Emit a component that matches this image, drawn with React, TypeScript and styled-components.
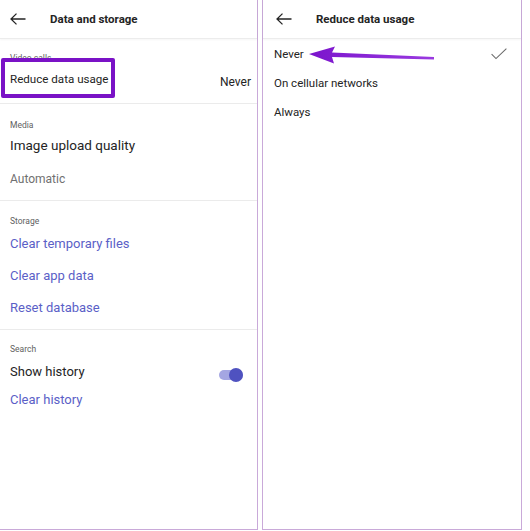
import React from "react";
import styled, { createGlobalStyle } from "styled-components";

const GlobalStyle = createGlobalStyle`
  html, body {
    margin: 0;
    padding: 0;
    background: #ffffff;
  }
  body {
    font-family: Roboto, "Noto Sans", "Liberation Sans", sans-serif;
    color: #242424;
  }
`;

const Page = styled.div`
  display: flex;
  width: 530px;
  height: 531px;
  background: #fff;
`;

const Panel = styled.div<{ $edge?: boolean }>`
  position: relative;
  box-sizing: border-box;
  width: ${(p) => (p.$edge ? "260px" : "258px")};
  height: 530px;
  margin-left: ${(p) => (p.$edge ? "4px" : "0")};
  border-right: 1px solid #c9a9d9;
  border-bottom: 1px solid #c9a9d9;
  border-left: ${(p) => (p.$edge ? "1px solid #c9a9d9" : "none")};
  display: flex;
  flex-direction: column;
`;

const Header = styled.div<{ $inset: number }>`
  height: 38px;
  display: flex;
  align-items: center;
  padding-left: ${(p) => p.$inset}px;
  border-bottom: 1px solid #ececec;
  box-shadow: 0 1px 2px rgba(0, 0, 0, 0.04);
`;

const Title = styled.div<{ $gap: number }>`
  margin-left: ${(p) => p.$gap}px;
  font-size: 11.5px;
  font-weight: 700;
  color: #242424;
`;

const Section = styled.div<{ $top: number; $bottom: number; $last?: boolean }>`
  padding: ${(p) => p.$top}px 6px ${(p) => p.$bottom}px 10px;
  border-bottom: ${(p) => (p.$last ? "none" : "1px solid #ebebeb")};
`;

const Label = styled.div`
  height: 12px;
  line-height: 12px;
  font-size: 8.5px;
  color: #616161;
`;

const Row = styled.div<{ $h: number; $mt?: number }>`
  display: flex;
  align-items: center;
  justify-content: space-between;
  height: ${(p) => p.$h}px;
  margin-top: ${(p) => p.$mt ?? 0}px;
`;

const Text = styled.span<{ $size?: number; $tone?: "main" | "muted" | "link" }>`
  font-size: ${(p) => p.$size ?? 13}px;
  color: ${(p) =>
    p.$tone === "link" ? "#5b5fc7" : p.$tone === "muted" ? "#707070" : "#242424"};
`;

const Value = styled.span`
  font-size: 12px;
  color: #242424;
  margin-top: 6px;
`;

const Toggle = styled.div`
  display: flex;
  align-items: center;
  justify-content: flex-end;
  width: 24px;
  height: 10px;
  margin: 8px 8px 0 0;
  border-radius: 5px;
  background: #a4a6e2;
`;

const Thumb = styled.div`
  width: 14px;
  height: 14px;
  flex: none;
  border-radius: 50%;
  background: #4f52c0;
`;

const Options = styled.div`
  display: flex;
  flex-direction: column;
  padding: 0 14px 0 11px;
`;

const Option = styled.div`
  display: flex;
  align-items: center;
  justify-content: space-between;
  height: 29px;
  font-size: 11.5px;
  color: #242424;
`;

/* highlight frame around the first setting */
const Frame = styled.div`
  position: absolute;
  left: 1px;
  top: 58px;
  width: 114px;
  height: 40px;
  box-sizing: border-box;
  border: 4px solid #7a12c6;
  border-radius: 2px;
`;

const Pointer = styled.svg`
  position: absolute;
  left: 44px;
  top: 44px;
`;

const BackArrow = () => (
  <svg width="16" height="12" viewBox="0 0 16 12" fill="none">
    <path d="M15.5 6H1M6.5 0.6 1 6l5.5 5.4" stroke="#242424" strokeWidth="1.3" />
  </svg>
);

const Check = () => (
  <svg width="16" height="12" viewBox="0 0 16 12" fill="none">
    <path d="M0.6 6.2 5 10.6 15.4 0.6" stroke="#6b6b6b" strokeWidth="1.1" />
  </svg>
);

const App = () => {
  return (
    <Page>
      <GlobalStyle />
      <Panel>
        <Header $inset={10}>
          <BackArrow />
          <Title $gap={24}>Data and storage</Title>
        </Header>

        <Section $top={13} $bottom={12}>
          <Label>Video calls</Label>
          <Row $h={24} $mt={3}>
            <Text $size={11.6}>Reduce data usage</Text>
            <Value>Never</Value>
          </Row>
        </Section>

        <Section $top={15} $bottom={11}>
          <Label>Media</Label>
          <Row $h={20} $mt={4}>
            <Text $size={13.5}>Image upload quality</Text>
          </Row>
          <Row $h={20} $mt={14}>
            <Text $size={12} $tone="muted">Automatic</Text>
          </Row>
        </Section>

        <Section $top={14} $bottom={6}>
          <Label>Storage</Label>
          <Row $h={32}>
            <Text $tone="link">Clear temporary files</Text>
          </Row>
          <Row $h={32}>
            <Text $tone="link">Clear app data</Text>
          </Row>
          <Row $h={32}>
            <Text $tone="link">Reset database</Text>
          </Row>
        </Section>

        <Section $top={13} $bottom={0} $last>
          <Label>Search</Label>
          <Row $h={32}>
            <Text>Show history</Text>
            <Toggle>
              <Thumb />
            </Toggle>
          </Row>
          <Row $h={24}>
            <Text $tone="link">Clear history</Text>
          </Row>
        </Section>

        <Frame />
      </Panel>

      <Panel $edge>
        <Header $inset={13}>
          <BackArrow />
          <Title $gap={24}>Reduce data usage</Title>
        </Header>

        <Options>
          <Option>
            <span>Never</span>
            <Check />
          </Option>
          <Option>On cellular networks</Option>
          <Option>Always</Option>
        </Options>

        <Pointer width="132" height="22" viewBox="0 0 132 22">
          <defs>
            <linearGradient id="pointerFill" x1="0" x2="1" y1="0" y2="0">
              <stop offset="0" stopColor="#7b14cc" />
              <stop offset="1" stopColor="#9a3ae0" />
            </linearGradient>
          </defs>
          <path
            d="M2 10 L28 2.5 L25 8.6 L127 13 L127 15.6 L25 13 L27 19.5 Z"
            fill="url(#pointerFill)"
          />
        </Pointer>
      </Panel>
    </Page>
  );
};

export default App;
